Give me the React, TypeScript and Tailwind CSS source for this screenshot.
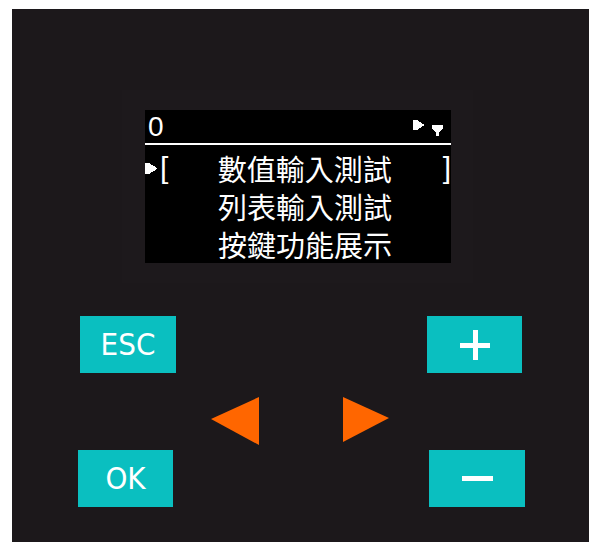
import React from "react";

const cjk = { fontFamily: '"Noto Sans CJK TC", "Noto Sans CJK SC", sans-serif' };
const sans = { fontFamily: '"Liberation Sans", Arial, sans-serif' };
const cond = { fontFamily: '"DejaVu Sans Condensed", "DejaVu Sans", sans-serif' };

function Pointer() {
  return (
    <svg width="12" height="11" viewBox="0 0 12 11" shapeRendering="crispEdges">
      <polygon points="0,0 4,0 12,5 12,6 4,11 0,11" fill="#fff" />
    </svg>
  );
}

function DownMark() {
  return (
    <svg width="11" height="11" viewBox="0 0 11 11" shapeRendering="crispEdges">
      <polygon points="0,0 11,0 11,3 7,8 7,11 4,11 4,8 0,3" fill="#fff" />
    </svg>
  );
}

function Key({ children, className = "" }: { children: React.ReactNode; className?: string }) {
  return (
    <div className={`h-[57px] bg-[#0abfc0] flex items-center justify-center text-white ${className}`}>
      {children}
    </div>
  );
}

const items = ["數值輸入測試", "列表輸入測試", "按鍵功能展示"];

export default function App() {
  return (
    <div className="min-h-screen bg-white pt-[9px] pl-[12px]">
      <div className="w-[577px] h-[533px] bg-[#1c181b] pt-[81px]">
        {/* bezel */}
        <div className="ml-[110px] w-[351px] bg-[#1d191c] px-[23px] py-[20px]">
          <div className="w-[306px] h-[153px] bg-black flex flex-col text-white">
            <div className="h-[33px] flex items-center justify-between pl-[3px] pr-[8px]">
              <span className="text-[28px] leading-none" style={sans}>0</span>
              <div className="flex items-start gap-[8px] pt-[2px]">
                <div className="pb-[5px]">
                  <svg width="11" height="10" viewBox="0 0 11 10" shapeRendering="crispEdges">
                    <polygon points="0,0 4,0 11,4.5 11,5.5 4,10 0,10" fill="#fff" />
                  </svg>
                </div>
                <div className="pt-[5px]">
                  <DownMark />
                </div>
              </div>
            </div>
            <div className="h-[2px] bg-white" />
            <div className="pt-[4px] flex flex-col">
              {items.map((t, i) => (
                <div key={t} className="h-[38px] flex items-center">
                  <div className="w-[15px] flex items-center">{i === 0 && <Pointer />}</div>
                  <div className="w-[58px] text-[30px] leading-none" style={sans}>
                    {i === 0 ? "[" : ""}
                  </div>
                  <div className="w-[226px] text-[29px] leading-none" style={cjk}>
                    {t}
                  </div>
                  <div className="text-[30px] leading-none" style={sans}>
                    {i === 0 ? "]" : ""}
                  </div>
                </div>
              ))}
            </div>
          </div>
        </div>

        {/* keys */}
        <div className="mt-[33px] flex">
          <Key className="ml-[68px] w-[96px]">
            <span className="text-[31px] leading-none" style={cond}>ESC</span>
          </Key>
          <Key className="ml-[251px] w-[95px]">
            <svg width="30" height="30" viewBox="0 0 30 30" shapeRendering="crispEdges">
              <rect x="12.5" y="0" width="5" height="30" fill="#fff" />
              <rect x="0" y="13" width="30" height="4.5" fill="#fff" />
            </svg>
          </Key>
        </div>

        <div className="mt-[24px] h-[48px] flex items-start">
          <svg className="ml-[199px]" width="48" height="48" viewBox="0 0 48 48">
            <polygon points="0,22 48,0 48,48" fill="#ff6600" />
          </svg>
          <svg className="ml-[84px]" width="46" height="45" viewBox="0 0 46 45">
            <polygon points="0,0 46,21 0,45" fill="#ff6600" />
          </svg>
        </div>

        <div className="mt-[5px] flex">
          <Key className="ml-[66px] w-[95px]">
            <span className="text-[31px] leading-none" style={cond}>OK</span>
          </Key>
          <Key className="ml-[256px] w-[96px]">
            <svg width="31" height="5" viewBox="0 0 31 5" shapeRendering="crispEdges">
              <rect x="0" y="0" width="31" height="5" fill="#fff" />
            </svg>
          </Key>
        </div>
      </div>
    </div>
  );
}
